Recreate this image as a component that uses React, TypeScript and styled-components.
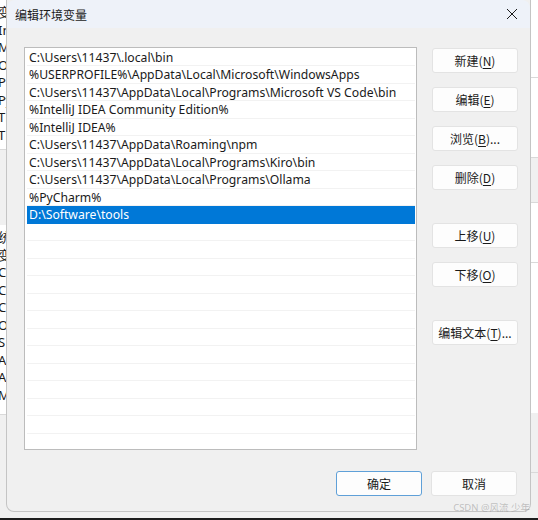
import styled, { createGlobalStyle } from 'styled-components';

const GlobalStyle = createGlobalStyle`
  html, body {
    margin: 0;
    padding: 0;
    background: #1c1c1c;
  }
  * {
    box-sizing: border-box;
  }
`;

const FONT = `"Noto Sans", "Noto Sans CJK SC", sans-serif`;

const Page = styled.div`
  width: 538px;
  height: 520px;
  display: flex;
  flex-direction: column;
  overflow: hidden;
  font-family: ${FONT};
  position: relative;
`;

const Desk = styled.div`
  height: 518px;
  display: flex;
  background: #f0f0f0;
`;

const BackStrip = styled.div<{ $width: number }>`
  width: ${({ $width }) => $width}px;
  flex: none;
  display: flex;
  flex-direction: column;
  overflow: hidden;
  background: #f0f0f0;
`;

const BackBlock = styled.div<{ $height: number; $white?: boolean; $line?: boolean }>`
  height: ${({ $height }) => $height}px;
  flex: none;
  background: ${({ $white }) => ($white ? '#ffffff' : '#f0f0f0')};
  border-bottom: ${({ $line }) => ($line ? '1px solid #d9d9d9' : 'none')};
  padding-top: 4px;
`;

const BackText = styled.div`
  height: 17.5px;
  margin-left: -2px;
  font-size: 13px;
  line-height: 17.5px;
  color: #1a1a1a;
  white-space: nowrap;
`;

const Dialog = styled.div`
  flex: 1;
  height: 512px;
  display: flex;
  flex-direction: column;
  background: #f0f0f0;
  border: 1px solid #c4c4c4;
  border-top: none;
  border-radius: 0 0 8px 8px;
  overflow: hidden;
`;

const TitleBar = styled.div`
  height: 28px;
  flex: none;
  display: flex;
  align-items: center;
  justify-content: space-between;
  padding: 0 12px 0 8px;
  background: #eef2f9;
  border-radius: 8px 8px 0 0;
`;

const Title = styled.span`
  font-family: "Noto Sans CJK SC", sans-serif;
  font-size: 12px;
  color: #1a1a1a;
`;

const CloseIcon = styled.svg`
  width: 12px;
  height: 12px;
`;

const Body = styled.div`
  flex: 1;
  display: flex;
  flex-direction: column;
  padding: 19px 13px 0 17px;
`;

const Main = styled.div`
  display: flex;
  gap: 15px;
`;

const ListBox = styled.div`
  width: 393px;
  height: 403px;
  flex: none;
  background: #ffffff;
  border: 1px solid #bcbcbc;
  padding: 0.5px 1px 0 2px;
  overflow: hidden;
`;

const Row = styled.div<{ $selected?: boolean }>`
  height: 17.5px;
  padding-left: 2px;
  font-size: 12.2px;
  line-height: 17.5px;
  white-space: nowrap;
  color: ${({ $selected }) => ($selected ? '#ffffff' : '#1a1a1a')};
  background: ${({ $selected }) => ($selected ? '#0078d7' : '#ffffff')};
  border-bottom: 1px solid ${({ $selected }) => ($selected ? '#0078d7' : '#f2f2f2')};
`;

const ButtonColumn = styled.div`
  display: flex;
  flex-direction: column;
  gap: 14px;
  padding-top: 1px;
`;

const Button = styled.button<{ $gapBefore?: number; $primary?: boolean }>`
  width: 86px;
  height: 25px;
  margin-top: ${({ $gapBefore }) => $gapBefore ?? 0}px;
  padding: 0;
  background: #fdfdfd;
  border: 1px solid ${({ $primary }) => ($primary ? '#5fa0d8' : '#e3e3e3')};
  border-radius: 3px;
  font-family: "Noto Sans CJK SC", sans-serif;
  font-size: 12px;
  color: #1a1a1a;
  letter-spacing: 0;
`;

const Key = styled.span`
  text-decoration: underline;
  text-underline-offset: 2px;
`;

const Footer = styled.div`
  display: flex;
  justify-content: flex-end;
  gap: 9px;
  padding-top: 21px;
`;

const Watermark = styled.div`
  position: absolute;
  right: 8px;
  bottom: 6px;
  font-size: 9.5px;
  color: rgba(150, 150, 150, 0.55);
  font-family: ${FONT};
`;

const paths = [
  'C:\\Users\\11437\\.local\\bin',
  '%USERPROFILE%\\AppData\\Local\\Microsoft\\WindowsApps',
  'C:\\Users\\11437\\AppData\\Local\\Programs\\Microsoft VS Code\\bin',
  '%IntelliJ IDEA Community Edition%',
  '%IntelliJ IDEA%',
  'C:\\Users\\11437\\AppData\\Roaming\\npm',
  'C:\\Users\\11437\\AppData\\Local\\Programs\\Kiro\\bin',
  'C:\\Users\\11437\\AppData\\Local\\Programs\\Ollama',
  '%PyCharm%',
  'D:\\Software\\tools',
];

const selectedIndex = 9;
const totalRows = 23;

const leftTop = ['变', 'In', 'Mi', 'Or', 'Pa', 'Py', 'TE', 'TM'];
const leftBottom = ['统', '变', 'Ch', 'CL', 'Co', 'Or', 'S', 'A', 'A', 'M'];

function App() {
  const rows = Array.from({ length: totalRows }, (_, i) => paths[i] ?? '');

  return (
    <Page>
      <GlobalStyle />
      <Desk>
        <BackStrip $width={6}>
          <BackBlock $height={150} $white $line>
            {leftTop.map((t, i) => (
              <BackText key={i}>{t}</BackText>
            ))}
          </BackBlock>
          <BackBlock $height={75} />
          <BackBlock $height={190} $white $line>
            {leftBottom.map((t, i) => (
              <BackText key={i}>{t}</BackText>
            ))}
          </BackBlock>
        </BackStrip>

        <Dialog>
          <TitleBar>
            <Title>编辑环境变量</Title>
            <CloseIcon viewBox="0 0 12 12">
              <path d="M1 1 L11 11 M11 1 L1 11" stroke="#1a1a1a" strokeWidth="1" fill="none" />
            </CloseIcon>
          </TitleBar>
          <Body>
            <Main>
              <ListBox>
                {rows.map((p, i) => (
                  <Row key={i} $selected={i === selectedIndex}>
                    {p}
                  </Row>
                ))}
              </ListBox>
              <ButtonColumn>
                <Button>
                  新建(<Key>N</Key>)
                </Button>
                <Button>
                  编辑(<Key>E</Key>)
                </Button>
                <Button>
                  浏览(<Key>B</Key>)...
                </Button>
                <Button>
                  删除(<Key>D</Key>)
                </Button>
                <Button $gapBefore={19}>
                  上移(<Key>U</Key>)
                </Button>
                <Button>
                  下移(<Key>O</Key>)
                </Button>
                <Button $gapBefore={19}>
                  编辑文本(<Key>T</Key>)...
                </Button>
              </ButtonColumn>
            </Main>
            <Footer>
              <Button $primary>确定</Button>
              <Button>取消</Button>
            </Footer>
          </Body>
        </Dialog>

        <BackStrip $width={7}>
          <BackBlock $height={28} $white />
          <BackBlock $height={50} $white $line />
          <BackBlock $height={80} $white $line />
          <BackBlock $height={45} $line />
          <BackBlock $height={60} $white $line />
          <BackBlock $height={150} $white />
          <BackBlock $height={60} $line />
        </BackStrip>
      </Desk>
      <Watermark>CSDN @风流 少年</Watermark>
    </Page>
  );
}

export default App;
